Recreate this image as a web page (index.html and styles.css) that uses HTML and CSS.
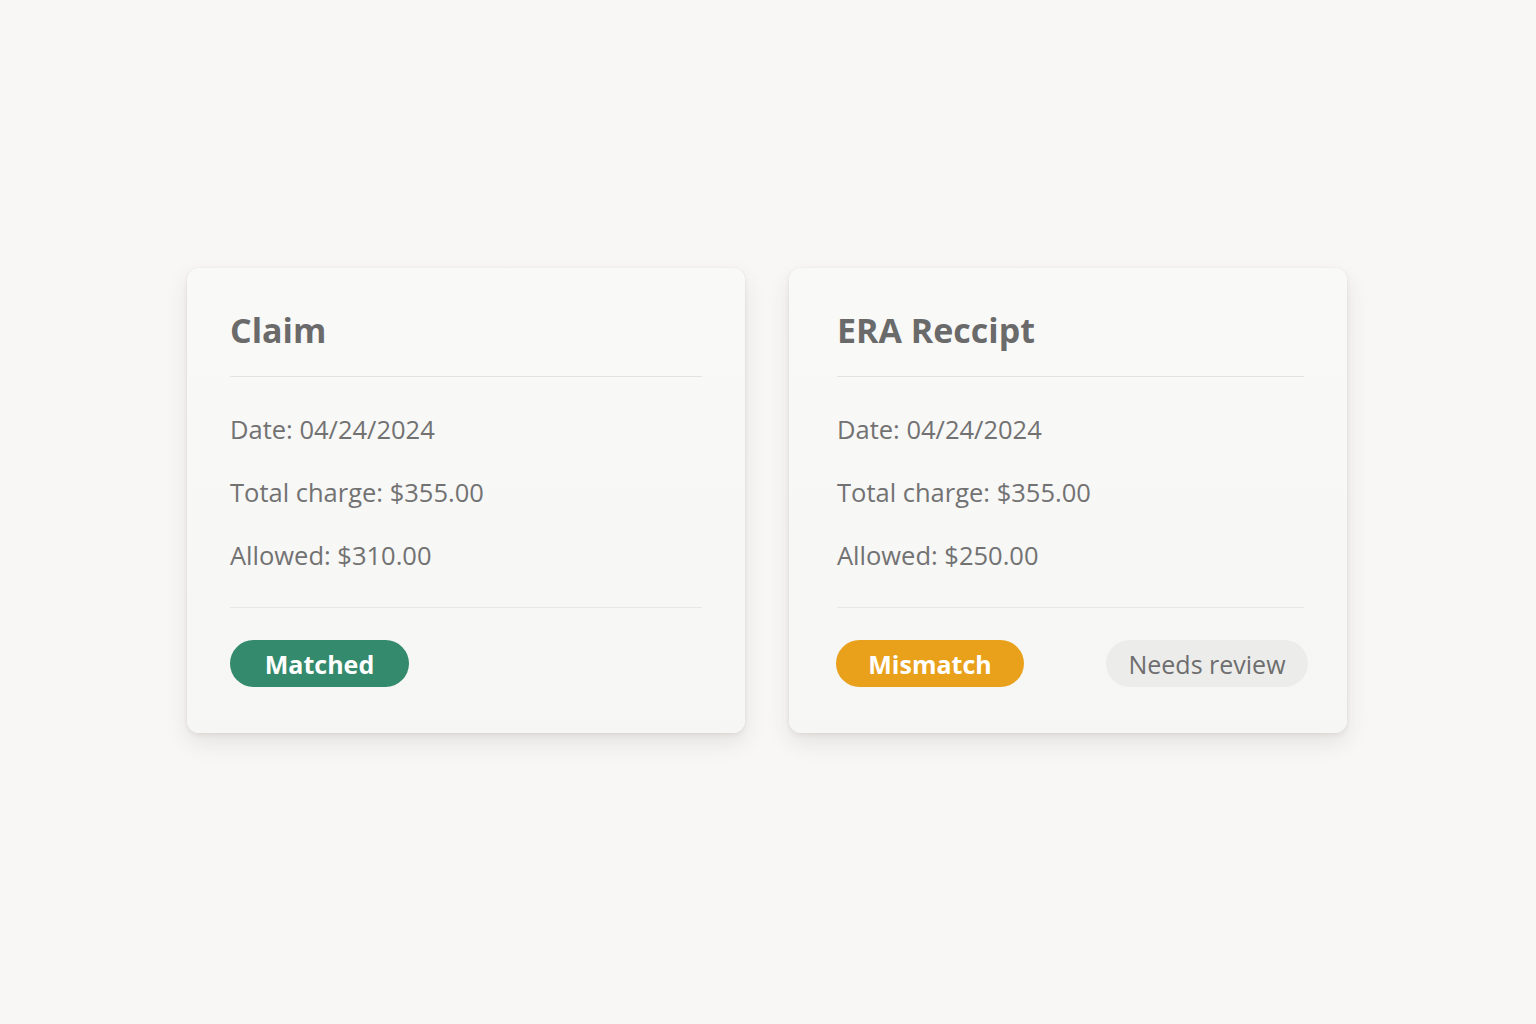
FILE: index.html
```html
<!DOCTYPE html>
<html lang="en">
<head>
<meta charset="utf-8">
<title>Claim vs ERA</title>
<link rel="stylesheet" href="styles.css">
</head>
<body>
<main class="page">
  <section class="cards">
    <article class="card">
      <h2 class="card-title">Claim</h2>
      <div class="rows">
        <p class="row">Date: 04/24/2024</p>
        <p class="row">Total charge: $355.00</p>
        <p class="row">Allowed: $310.00</p>
      </div>
      <div class="card-footer">
        <span class="badge badge-green">Matched</span>
      </div>
    </article>
    <article class="card card-wide-pad">
      <h2 class="card-title">ERA Reccipt</h2>
      <div class="rows">
        <p class="row">Date: 04/24/2024</p>
        <p class="row">Total charge: $355.00</p>
        <p class="row">Allowed: $250.00</p>
      </div>
      <div class="card-footer">
        <span class="badge badge-orange">Mismatch</span>
        <span class="badge badge-gray">Needs review</span>
      </div>
    </article>
  </section>
</main>
</body>
</html>
```

FILE: styles.css
```css
html, body {
  margin: 0;
  padding: 0;
}

body {
  background: #f8f7f5;
  font-family: "Open Sans", Lato, "Liberation Sans", sans-serif;
  color: #6e6e6e;
  width: 1536px;
  height: 1024px;
  overflow: hidden;
}

.page {
  display: flex;
  justify-content: center;
  padding-top: 268px;
  padding-right: 2px;
}

.cards {
  display: flex;
  gap: 44px;
}

.card {
  width: 558px;
  box-sizing: border-box;
  padding: 41px 43px 46px 43px;
  background: linear-gradient(180deg, #f9f9f8 0%, #f6f6f5 100%);
  border-radius: 12px;
  box-shadow: 0 10px 22px rgba(60, 55, 50, 0.10), 0 2px 5px rgba(60, 55, 50, 0.08), 0 0 1px rgba(60, 55, 50, 0.10);
}

.card-wide-pad {
  padding-left: 48px;
}

.card-title {
  margin: 0;
  font-size: 34px;
  line-height: 42px;
  font-weight: 700;
  color: #6a6a6a;
  padding-bottom: 25px;
  border-bottom: 1px solid #e3e3e1;
}

.rows {
  display: flex;
  flex-direction: column;
  gap: 33px;
  padding: 37px 0 37px;
  border-bottom: 1px solid #e7e7e5;
}

.row {
  margin: 0;
  font-size: 25.5px;
  line-height: 30px;
  color: #727272;
}

.card-footer {
  display: flex;
  justify-content: space-between;
  align-items: center;
  padding-top: 32px;
}

.badge {
  display: inline-flex;
  align-items: center;
  justify-content: center;
  height: 47px;
  border-radius: 24px;
  font-size: 25px;
  box-sizing: border-box;
}

.badge-green {
  width: 179px;
  background: #348a6c;
  color: #ffffff;
  font-weight: 700;
}

.badge-orange {
  width: 188px;
  margin-left: -1px;
  background: #e9a11c;
  color: #ffffff;
  font-weight: 700;
}

.badge-gray {
  width: 202px;
  margin-right: -4px;
  background: #ececeb;
  color: #6e6e6e;
  font-weight: 400;
}
```
